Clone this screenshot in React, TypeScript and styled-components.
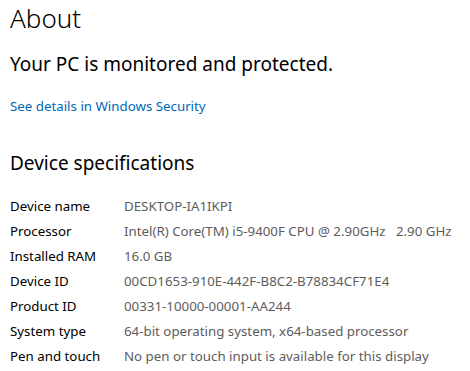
import styled, { createGlobalStyle } from "styled-components";

const GlobalStyle = createGlobalStyle`
  body {
    margin: 0;
    background: #fff;
    font-family: "Noto Sans", "Open Sans", sans-serif;
  }
`;

const specs = [
  ["Device name", "DESKTOP-IA1IKPI"],
  ["Processor", "Intel(R) Core(TM) i5-9400F CPU @ 2.90GHz   2.90 GHz"],
  ["Installed RAM", "16.0 GB"],
  ["Device ID", "00CD1653-910E-442F-B8C2-B78834CF71E4"],
  ["Product ID", "00331-10000-00001-AA244"],
  ["System type", "64-bit operating system, x64-based processor"],
  ["Pen and touch", "No pen or touch input is available for this display"],
];

const App = () => {
  return (
    <>
      <GlobalStyle />
      <Page>
        <Title>About</Title>
        <Status>Your PC is monitored and protected.</Status>
        <Link href="#">See details in Windows Security</Link>
        <Heading>Device specifications</Heading>
        <SpecTable>
          {specs.map(([label, value]) => (
            <SpecRow key={label}>
              <Label>{label}</Label>
              <Value>{value}</Value>
            </SpecRow>
          ))}
        </SpecTable>
      </Page>
    </>
  );
};

export default App;

const Page = styled.div`
  display: flex;
  flex-direction: column;
  align-items: flex-start;
  padding: 0 0 0 10px;
  color: #000;
`;

const Title = styled.h1`
  margin: 0;
  font-size: 26px;
  font-weight: 300;
  line-height: 36px;
`;

const Status = styled.div`
  margin-top: 14px;
  font-size: 19px;
  line-height: 28px;
`;

const Link = styled.a`
  margin-top: 18px;
  font-size: 13.3px;
  line-height: 20px;
  color: #0067b8;
  text-decoration: none;
`;

const Heading = styled.h2`
  margin: 33px 0 0;
  font-size: 19px;
  font-weight: 400;
  line-height: 28px;
`;

const SpecTable = styled.div`
  display: flex;
  flex-direction: column;
  margin-top: 16px;
`;

const SpecRow = styled.div`
  display: grid;
  grid-template-columns: 114px auto;
  height: 25px;
  align-items: center;
  font-size: 13.3px;
`;

const Label = styled.div`
  color: #000;
`;

const Value = styled.div`
  color: #5d5d5d;
  white-space: pre;
`;
